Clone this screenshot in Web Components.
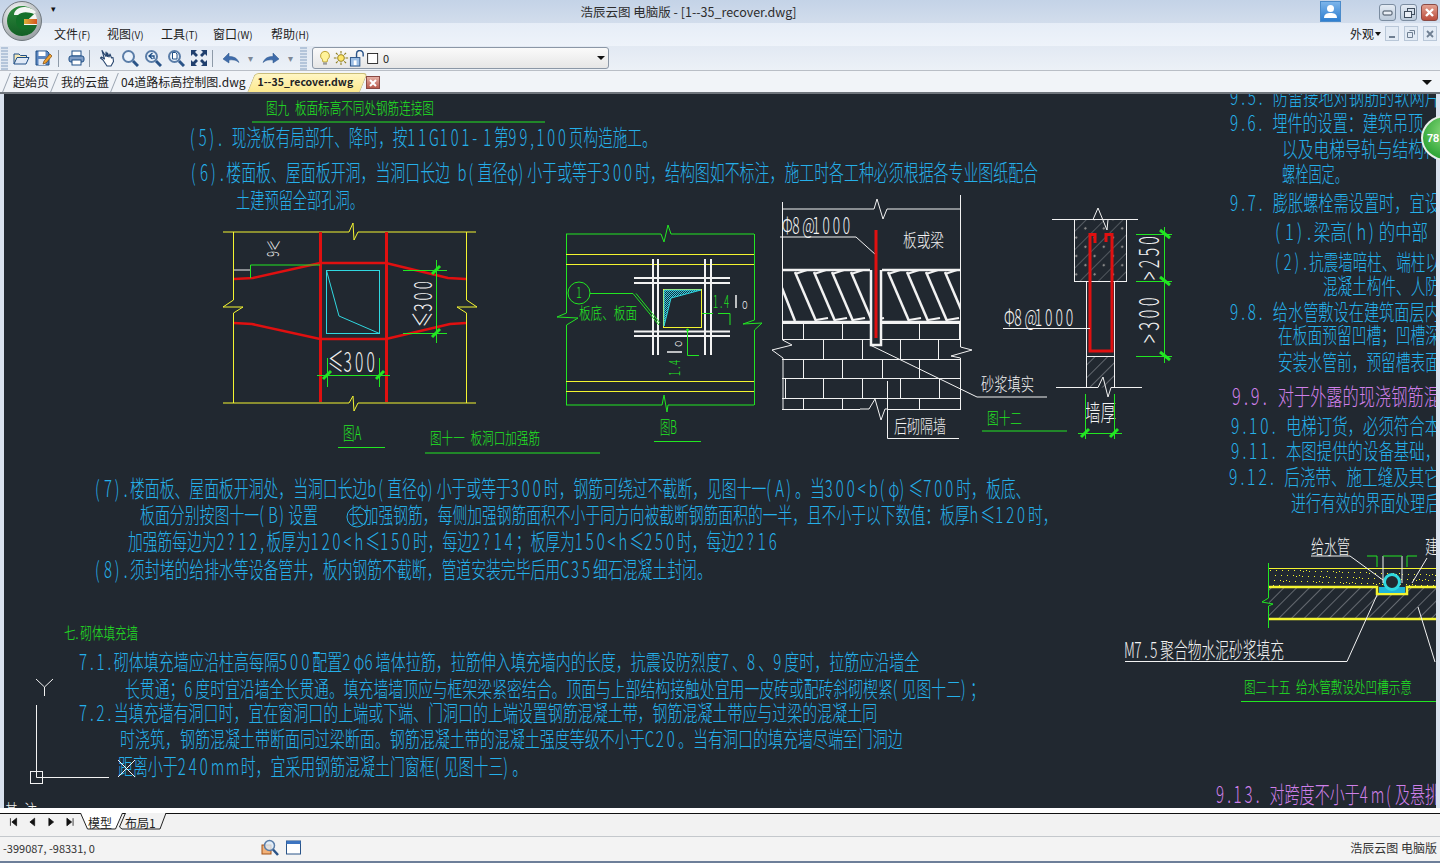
<!DOCTYPE html>
<html lang="zh">
<head>
<meta charset="utf-8">
<title>浩辰云图 电脑版</title>
<style>
  html, body { margin: 0; height: 100%; overflow: hidden; background: #d9e2ee; }
  body { font-family: "Noto Sans CJK SC", "Liberation Sans", sans-serif; font-size: 12px; color: #222; }
</style>
</head>
<body>
<gc-app>
  <gc-titlebar>浩辰云图 电脑版 - [1--35_recover.dwg]</gc-titlebar>
  <gc-menubar>
    <gc-menu-item style="width:53px">文件<small>(F)</small></gc-menu-item>
    <gc-menu-item style="width:54px">视图<small>(V)</small></gc-menu-item>
    <gc-menu-item style="width:52px">工具<small>(T)</small></gc-menu-item>
    <gc-menu-item style="width:58px">窗口<small>(W)</small></gc-menu-item>
    <gc-menu-item style="width:50px">帮助<small>(H)</small></gc-menu-item>
  </gc-menubar>
  <gc-toolbar></gc-toolbar>
  <gc-tabstrip>
    <gc-tab>起始页</gc-tab>
    <gc-tab>我的云盘</gc-tab>
    <gc-tab>04道路标高控制图.dwg</gc-tab>
    <gc-tab active>1--35_recover.dwg</gc-tab>
  </gc-tabstrip>
  <gc-canvas></gc-canvas>
  <gc-layouttabs>
    <gc-sheet-tab active>模型</gc-sheet-tab>
    <gc-sheet-tab>布局1</gc-sheet-tab>
  </gc-layouttabs>
  <gc-statusbar coords="-399087, -98331, 0" brand="浩辰云图 电脑版"></gc-statusbar>
</gc-app>

<script>
const ICONS = {
  open: '<path d="M2 15V5h5l1.500 1.500h6V9" fill="#f6e9b8" stroke="#1f4f86"/><path d="M2 15l3-6.500h12L14 15z" fill="#dfe9f7" stroke="#1f4f86"/>',
  save: '<path d="M2 2h11l2 2v12H2z" fill="#5b86c0" stroke="#1f4f86"/><rect x="4.500" y="2.500" width="7" height="4.500" fill="#fff"/><rect x="4.500" y="10" width="7" height="6" fill="#dfe9f7"/><path d="M9 15l1-3 6-7 2 2-6 7z" fill="#f0a030" stroke="#7a4a10" stroke-width=".7"/>',
  print: '<rect x="5" y="2" width="9" height="5" fill="#fff" stroke="#1f4f86"/><rect x="2" y="7" width="15" height="6" rx="2" fill="#7f9cc4" stroke="#1f4f86"/><rect x="5" y="11" width="9" height="5" fill="#fff" stroke="#1f4f86"/>',
  hand: '<path d="M4 1.500l4 6V3l1.500 4.500V4l1.500 4 1-3 1.500 4 1.500-.5.500 4-2.500 4.500H9L5 11 2.500 9l1-1L6.500 10z" fill="#fff" stroke="#27456e" stroke-width="1.100" stroke-linejoin="round"/>',
  zoom: '<circle cx="7.500" cy="7.500" r="5.500" fill="#eaf2fb" stroke="#5a7da8" stroke-width="2"/><path d="M12 12l5 5" stroke="#2a5488" stroke-width="3"/>',
  zoomprev: '<circle cx="7.500" cy="7.500" r="5.500" fill="#eaf2fb" stroke="#5a7da8" stroke-width="2"/><path d="M12 12l5 5" stroke="#2a5488" stroke-width="3"/><path d="M8.500 4L5 7l3.500 3M5 7h5v3" fill="none" stroke="#1f4f86" stroke-width="1.300"/>',
  zoompage: '<circle cx="7.500" cy="7.500" r="5.500" fill="#eaf2fb" stroke="#5a7da8" stroke-width="2"/><path d="M12 12l5 5" stroke="#2a5488" stroke-width="3"/><path d="M5.500 3.500h3l1.500 1.500v5h-4.500z" fill="#fff" stroke="#1f4f86"/>',
  extents: '<g fill="#1f3f6e"><path d="M1 1h6L5 3l3 3-2 2-3-3-2 2zM17 1v6l-2-2-3 3-2-2 3-3-2-2zM1 17v-6l2 2 3-3 2 2-3 3 2 2zM17 17h-6l2-2-3-3 2-2 3 3 2-2z"/></g>',
  undo: '<path d="M1 10l6-6v3.500c5 0 8 1.500 10 6-3-2.500-6-3-10-2.500V14z" fill="#3f6cab" stroke="#2a5488" stroke-width=".5"/>',
  redo: '<path d="M17 10l-6-6v3.500c-5 0-8 1.500-10 6 3-2.500 6-3 10-2.500V14z" fill="#3f6cab" stroke="#2a5488" stroke-width=".5"/>',
  bulb: '<path d="M9 1.500a5 5 0 0 1 3 9l-.7 3H6.700L6 10.500a5 5 0 0 1 3-9z" fill="#fff39a" stroke="#b59a2a"/><rect x="6.800" y="14" width="4.400" height="2.500" fill="#9a9a9a"/>',
  sun: '<circle cx="9" cy="9" r="3.800" fill="#ffe668" stroke="#8c7a1a"/><path d="M9 1v3M9 14v3M1 9h3M14 9h3M3.300 3.300l2 2M12.700 12.700l2 2M3.300 14.700l2-2M12.700 5.300l2-2" stroke="#8c7a1a" stroke-width="1.200"/>',
  lock: '<rect x="1.500" y="8" width="10" height="9" fill="#9ec0e6" stroke="#2a5488"/><rect x="5" y="11" width="3" height="5" fill="#fff"/><path d="M8 8V4a3.500 3.500 0 0 1 7 0v3" fill="none" stroke="#2a5488" stroke-width="1.500"/>',
  square: '<rect x="2" y="3" width="12" height="12" fill="#fff" stroke="#111"/>',
  find: '<rect x="1" y="6" width="9" height="9" fill="#f2b27a" stroke="#a0521a"/><circle cx="8.500" cy="6.500" r="5" fill="#dcebf9" fill-opacity=".8" stroke="#5a7da8" stroke-width="1.500"/><path d="M12 10.500l5 5.500" stroke="#2a5488" stroke-width="2.500"/>',
  win: '<rect x="1.500" y="2" width="14" height="13" fill="#fff" stroke="#2a5488"/><rect x="1.500" y="2" width="14" height="3" fill="#3d74c0"/>'
};

class GcIcon extends HTMLElement {
  connectedCallback() {
    const size = this.getAttribute('size') || 18;
    this.attachShadow({ mode: 'open' }).innerHTML = `
      <style>:host { display: inline-flex; flex: none; } svg { display: block; }</style>
      <svg width="${size}" height="${size}" viewBox="0 0 18 18">${ICONS[this.getAttribute('name')] || ''}</svg>`;
  }
}
customElements.define('gc-icon', GcIcon);

class GcApp extends HTMLElement {
  constructor() {
    super();
    this.attachShadow({ mode: 'open' }).innerHTML = `
      <style>
        :host { display: flex; flex-direction: column; height: 863px; position: relative; overflow: hidden; }
        .logo { position: absolute; left: 2px; top: 1px; }
        .badge { position: absolute; left: 1421px; top: 115px; width: 42px; height: 42px; border-radius: 50%;
                 border: 2px solid #e8efe8; background: radial-gradient(circle at 50% 35%, #8fdc80, #33a83a 70%);
                 color: #fff; font: bold 11px "Liberation Sans", sans-serif; line-height: 42px; padding-left: 4px; box-sizing: content-box; }
      </style>
      <slot></slot>
      <svg class="logo" width="40" height="40" viewBox="0 0 40 40">
        <defs>
          <radialGradient id="ring" cx=".4" cy=".3" r=".8"><stop offset="0" stop-color="#fff"/><stop offset="1" stop-color="#8d9499"/></radialGradient>
          <linearGradient id="gr" x1="0" y1="0" x2="0" y2="1"><stop offset="0" stop-color="#2d8a3c"/><stop offset="1" stop-color="#125f25"/></linearGradient>
          <linearGradient id="or" x1="0" y1="0" x2="1" y2="0"><stop offset="0" stop-color="#d9b23a"/><stop offset="1" stop-color="#d8541f"/></linearGradient>
        </defs>
        <circle cx="20" cy="20" r="19.500" fill="url(#ring)" stroke="#70787e"/>
        <circle cx="20" cy="20" r="15" fill="#f4f6f4"/>
        <path d="M33 12C30 7 26 5 20 5 11 5 5 12 5 20s6 15 15 15c7 0 13-4 15-11H22v-3" fill="url(#gr)"/>
        <path d="M32 13c-3-2-7-3-11-2-5 1-7 5-7 9 0 5 3 8 7 8.500 3 .3 6-.7 8-3H19" fill="#137029"/>
        <path d="M22 18h13v5H22z" fill="url(#or)"/>
        <path d="M16 14c4-4 11-3 16-1l2-2c-4-4-9-5-12-5-6 0-10 4-10 8z" fill="#f4f6f4"/>
      </svg>
      <div class="badge">78</div>`;
  }
}
customElements.define('gc-app', GcApp);

class GcTitlebar extends HTMLElement {
  constructor() {
    super();
    this.attachShadow({ mode: 'open' }).innerHTML = `
      <style>
        :host { display: flex; align-items: center; height: 23px; flex: none; position: relative;
                background: linear-gradient(#c4d3e7, #d2ddec); font-size: 12.500px; color: #2d2d2d; }
        .qa { margin-left: 51px; width: 8px; color: #111; font: 9px/10px "Liberation Sans", sans-serif; margin-top: -5px; }
        .title { width: 217px; margin-left: 521px; white-space: nowrap; text-align: center; margin-top: -1px; }
        .user { margin-left: 523px; width: 21px; height: 21px; background: linear-gradient(#7cb4ea, #2f7fd0); border: 1px solid #4b8bca; box-sizing: border-box; display: flex; align-items: center; justify-content: center; }
        .btns { margin-left: 38px; display: flex; gap: 4px; margin-top: 2px; }
        .b { width: 17px; height: 17px; box-sizing: border-box; border: 1px solid #7b8ca0; border-radius: 3px; background: linear-gradient(#e4ebf4, #bccada); display: flex; align-items: center; justify-content: center; }
        .b.x { background: linear-gradient(#e3a191, #bb4d3c); border-color: #8a4a44; }
      </style>
      <span class="qa">▾</span>
      <span class="title"><slot></slot></span>
      <span class="user"><svg width="15" height="15" viewBox="0 0 15 15"><circle cx="7.500" cy="4.500" r="3.500" fill="#fff"/><path d="M1 14c0-4 3-5 6.500-5s6.500 1 6.500 5z" fill="#fff"/></svg></span>
      <span class="btns">
        <span class="b"><svg width="11" height="11"><rect x="1" y="4" width="9" height="4" rx="1" fill="#e9eef5" stroke="#3e4c5c"/></svg></span>
        <span class="b"><svg width="12" height="12"><rect x="4.500" y="1.500" width="7" height="6" fill="none" stroke="#3e4c5c"/><rect x="1.500" y="4.500" width="7" height="6" fill="#e9eef5" stroke="#3e4c5c"/></svg></span>
        <span class="b x"><svg width="11" height="11"><path d="M2 2l7 7M9 2L2 9" stroke="#fff" stroke-width="2.400"/></svg></span>
      </span>`;
  }
}
customElements.define('gc-titlebar', GcTitlebar);

class GcMenubar extends HTMLElement {
  constructor() {
    super();
    this.attachShadow({ mode: 'open' }).innerHTML = `
      <style>
        :host { display: flex; align-items: center; height: 23px; flex: none; padding: 0 0 2px 54px; box-sizing: border-box;
                background: linear-gradient(#e6edf7, #eef3fa); }
        .right { margin-left: auto; display: flex; align-items: center; padding-right: 3px; }
        .look { font-size: 12px; white-space: nowrap; display: flex; align-items: center; gap: 1px; margin-right: -1px; }
        .look i { width: 0; height: 0; border: 3.500px solid transparent; border-top: 4px solid #111; border-bottom: 0; }
        .m { width: 14px; height: 15px; box-sizing: border-box; border: 1px solid #b9c7d8; background: #e3ebf5; margin-left: 5px; display: flex; align-items: center; justify-content: center; }
        .m svg { display: block; }
      </style>
      <slot></slot>
      <span class="right">
        <span class="look">外观<i></i></span>
        <span class="m"><svg width="10" height="10"><rect x="2" y="7" width="6" height="2" fill="#6f7f92"/></svg></span>
        <span class="m"><svg width="10" height="10"><path d="M3.500 1.500h5v4M1.500 3.500h5v5h-5z" fill="none" stroke="#6f7f92"/></svg></span>
        <span class="m"><svg width="10" height="10"><path d="M2 2l6 6M8 2L2 8" stroke="#6f7f92" stroke-width="1.800"/></svg></span>
      </span>`;
  }
}
customElements.define('gc-menubar', GcMenubar);

class GcMenuItem extends HTMLElement {
  constructor() {
    super();
    this.attachShadow({ mode: 'open' }).innerHTML = `
      <style>
        :host { display: block; flex: none; font-size: 12px; white-space: nowrap; color: #222; }
        ::slotted(small) { font-size: 10px; }
      </style><slot></slot>`;
  }
}
customElements.define('gc-menu-item', GcMenuItem);

class GcToolbar extends HTMLElement {
  constructor() {
    super();
    const btn = (n, w = 23) => `<span class="btn" style="width:${w}px"><gc-icon name="${n}"></gc-icon></span>`;
    const sep = (l, r) => `<span class="sep" style="margin:0 ${r}px 0 ${l}px"></span>`;
    const drop = (l) => `<span class="drop" style="margin-left:${l}px">▾</span>`;
    this.attachShadow({ mode: 'open' }).innerHTML = `
      <style>
        :host { display: flex; align-items: center; height: 25px; flex: none; box-sizing: border-box;
                background: linear-gradient(#e2e9f3, #ecf1f7); border-bottom: 1px solid #b9bec6; }
        .grip { width: 7px; height: 23px; margin: 0 2px 0 1px; background: repeating-linear-gradient(#b4c5da 0 2px, #dfe7f1 2px 3px); flex: none; }
        .btn { display: flex; justify-content: center; flex: none; }
        .sep { width: 1px; height: 17px; background: #8d9aa8; flex: none; }
        .drop { width: 17px; text-align: center; color: #7d8896; font: 10px "Liberation Sans", sans-serif; flex: none; }
        .combo { width: 297px; height: 22px; box-sizing: border-box; margin-left: 5px; display: flex; align-items: center; gap: 0; padding-left: 4px;
                 border: 1px solid #8b97a6; border-radius: 3px; background: linear-gradient(#fafafa, #e6e6e6); flex: none; font-size: 11px; }
        .combo b { font-weight: normal; margin-left: 2px; }
        .arrow { margin-left: auto; width: 0; height: 0; border: 4px solid transparent; border-top: 4px solid #111; border-bottom: 0; margin-right: 3px; }
      </style>
      <span class="grip"></span>
      ${btn('open', 22)}${btn('save', 22)}${sep(4, 6)}${btn('print', 21)}${sep(3, 5)}
      ${btn('hand')}${btn('zoom')}${btn('zoomprev')}${btn('zoompage')}${btn('extents')}${sep(2, 8)}
      ${btn('undo', 20)}${drop(1)}<span style="width:2px"></span>${btn('redo', 20)}${drop(1)}
      <span class="grip" style="margin:0 0 0 1px"></span>
      <span class="combo">
        <gc-icon name="bulb" size="16"></gc-icon><gc-icon name="sun" size="16"></gc-icon><gc-icon name="lock" size="17"></gc-icon><gc-icon name="square" size="15"></gc-icon><b>0</b>
        <span class="arrow"></span>
      </span>`;
  }
}
customElements.define('gc-toolbar', GcToolbar);

class GcTab extends HTMLElement {
  constructor() {
    super();
    this.attachShadow({ mode: 'open' }).innerHTML = `
      <style>
        :host { display: block; position: relative; padding: 1px 6px 0; font-size: 12px; line-height: 20px; height: 20px; white-space: nowrap; color: #222; flex: none; }
        :host::before { content: ""; position: absolute; inset: 2px -1px 0 -1px; z-index: -1; transform: skewX(-22deg); border-left: 1px solid #9aa4b0; }
        :host([active]) { font-weight: bold; font-size: 10.500px; padding-right: 9px; }
        :host([active])::before { background: linear-gradient(#fff6c4, #fce98e); border: 1px solid #c9bd7a; border-bottom: 0; border-radius: 4px 4px 0 0; }
      </style><slot></slot>`;
  }
}
customElements.define('gc-tab', GcTab);

class GcTabstrip extends HTMLElement {
  constructor() {
    super();
    this.attachShadow({ mode: 'open' }).innerHTML = `
      <style>
        :host { display: flex; align-items: flex-end; height: 23px; flex: none; padding-left: 7px; box-sizing: border-box;
                background: #f1f4f8; border-bottom: 2px solid #6f757c; position: relative; z-index: 0; }
        .close { width: 14px; height: 13px; margin: 0 0 3px 4px; box-sizing: border-box; border: 1px solid #8a4a44; background: linear-gradient(#e6b0a6, #b85a4c); display: flex; align-items: center; justify-content: center; }
        .menu { margin-left: auto; margin-right: 8px; margin-bottom: 7px; width: 0; height: 0; border: 5px solid transparent; border-top: 5px solid #111; border-bottom: 0; }
      </style>
      <slot></slot>
      <span class="close"><svg width="8" height="8"><path d="M1 1l6 6M7 1L1 7" stroke="#fff" stroke-width="2"/></svg></span>
      <span class="menu"></span>`;
  }
}
customElements.define('gc-tabstrip', GcTabstrip);

// every drawing helper takes page coordinates, the svg viewBox starts at the canvas corner
const CYAN = '#25b0ea', GREEN = '#22e622', WHITE = '#f2f2f2', RED = '#e01010', YELLOW = '#f4f430', PINK = '#d080ea', TEAL = '#30d8e0';
const BG = '#212830';

function esc(s) { return s.replace(/&/g, '&amp;').replace(/</g, '&lt;'); }

// CAD fonts give each glyph a fixed slot, wide for hanzi and narrower for latin
function slot(ch) {
  if (ch === ' ') return .5;
  if ('.,:;'.includes(ch)) return .42;
  if ('()'.includes(ch)) return .6;
  if ('≤≥m'.includes(ch)) return 1;
  if (ch.charCodeAt(0) < 0x2E80) return .74;
  return 1;
}
function cadText(s, len, size) {
  const chars = Array.from(s);
  const total = chars.reduce((a, c) => a + slot(c), 0);
  const unit = len / total;
  const sx = Math.min(1.15, unit / size);
  let at = 0;
  const xs = chars.map(c => { const v = at; at += slot(c) * unit / sx; return v.toFixed(1); });
  return { sx: sx.toFixed(3), xs: xs.join(' ') };
}
function txt(x0, x1, cy, s, color = CYAN, size = 20) {
  size = size * 1.08;
  const { sx, xs } = cadText(s, x1 - x0, size);
  return `<text transform="translate(${x0} ${cy + size * 0.36}) scale(${sx} 1)" x="${xs}" y="0" fill="${color}" font-size="${size}">${esc(s)}</text>`;
}
function vtxt(cx, y0, y1, s, color = WHITE, size = 24, rot = -90) {
  const len = y1 - y0, cy = (y0 + y1) / 2;
  const { sx, xs } = cadText(s, len, size);
  return `<text transform="rotate(${rot} ${cx} ${cy}) translate(${cx - len / 2} ${cy + size * 0.36}) scale(${sx} 1)" x="${xs}" y="0" fill="${color}" font-size="${size}">${esc(s)}</text>`;
}
function pl(color, w, ...p) {
  const pts = [];
  for (let i = 0; i < p.length; i += 2) pts.push(p[i] + ',' + p[i + 1]);
  return `<polyline points="${pts.join(' ')}" fill="none" stroke="${color}" stroke-width="${w}"/>`;
}
function tick(x, y, dx = 4, dy = -4) { return pl(GREEN, 3, x - dx, y - dy, x + dx, y + dy); }

function paragraphs() {
  return [
    txt(266, 434, 108, '图九 板面标高不同处钢筋连接图', GREEN, 15), pl(GREEN, 1, 252, 122, 545, 122),
    txt(190, 657, 138, '(5). 现浇板有局部升、降时，按11G101-1第99,100页构造施工。', CYAN, 21),
    txt(191, 1038, 173, '(6).楼面板、屋面板开洞，当洞口长边 b(直径φ)小于或等于300时，结构图如不标注，施工时各工种必须根据各专业图纸配合', CYAN, 21),
    txt(236, 364, 200, '土建预留全部孔洞。', CYAN, 20),
    txt(95, 1030, 489, '(7).楼面板、屋面板开洞处，当洞口长边b(直径φ)小于或等于300时，钢筋可绕过不截断，见图十一(A)。当300<b(φ)≤700时，板底、', CYAN, 21),
    txt(140, 318, 515, '板面分别按图十一(B)设置', CYAN, 20),
    txt(349, 1058, 515, '长加强钢筋，每侧加强钢筋面积不小于同方向被截断钢筋面积的一半，且不小于以下数值：板厚h≤120时，', CYAN, 20),
    `<circle cx="357" cy="517" r="10" fill="none" stroke="${CYAN}"/>`,
    txt(128, 780, 542, '加强筋每边为2?12,板厚为120<h≤150时，每边2?14；板厚为150<h≤250时，每边2?16', CYAN, 21),
    txt(95, 712, 570, '(8).须封堵的给排水等设备管井，板内钢筋不截断，管道安装完毕后用C35细石混凝土封闭。', CYAN, 21),
    txt(64, 138, 633, '七.砌体填充墙', GREEN, 15),
    txt(79, 919, 662, '7.1.砌体填充墙应沿柱高每隔500配置2φ6墙体拉筋，拉筋伸入填充墙内的长度，抗震设防烈度7、8、9度时，拉筋应沿墙全', CYAN, 20),
    txt(125, 985, 689, '长贯通；6度时宜沿墙全长贯通。填充墙墙顶应与框架梁紧密结合。顶面与上部结构接触处宜用一皮砖或配砖斜砌楔紧(见图十二)；', CYAN, 20),
    txt(79, 877, 713, '7.2.当填充墙有洞口时，宜在窗洞口的上端或下端、门洞口的上端设置钢筋混凝土带，钢筋混凝土带应与过梁的混凝土同', CYAN, 20),
    txt(120, 903, 739, '时浇筑，钢筋混凝土带断面同过梁断面。钢筋混凝土带的混凝土强度等级不小于C20。当有洞口的填充墙尽端至门洞边', CYAN, 20),
    txt(118, 527, 767, '距离小于240mm时，宜采用钢筋混凝土门窗框(见图十三)。', CYAN, 21),
    // right column, runs past the edge of the view
    txt(1230, 1440, 97, '9.5. 防雷接地对钢筋的软网片', CYAN, 20),
    txt(1230, 1423, 123, '9.6. 埋件的设置：建筑吊顶', CYAN, 20),
    txt(1282, 1440, 149, '以及电梯导轨与结构构', CYAN, 20),
    txt(1282, 1348, 174, '螺栓固定。', CYAN, 20),
    txt(1230, 1440, 203, '9.7. 膨胀螺栓需设置时，宜设', CYAN, 20),
    txt(1275, 1428, 232, '(1).梁高(h)的中部', CYAN, 20),
    txt(1275, 1440, 262, '(2).抗震墙暗柱、端柱以', CYAN, 20),
    txt(1323, 1440, 286, '混凝土构件、人防', CYAN, 20),
    txt(1230, 1440, 312, '9.8. 给水管敷设在建筑面层内', CYAN, 20),
    txt(1278, 1440, 335, '在板面预留凹槽；凹槽深', CYAN, 20),
    txt(1278, 1440, 362, '安装水管前，预留槽表面', CYAN, 20),
    txt(1232, 1440, 397, '9.9. 对于外露的现浇钢筋混', PINK, 21),
    txt(1231, 1440, 426, '9.10. 电梯订货，必须符合本', CYAN, 20),
    txt(1231, 1440, 451, '9.11. 本图提供的设备基础，', CYAN, 20),
    txt(1229, 1440, 477, '9.12. 后浇带、施工缝及其它', CYAN, 20),
    txt(1291, 1440, 503, '进行有效的界面处理后', CYAN, 20),
    txt(1216, 1440, 795, '9.13. 对跨度不小于4m(及悬挑', PINK, 21),
    txt(5, 37, 812, '基 注', WHITE, 18)
  ].join('');
}

function figureA() {
  return [
    pl(YELLOW, 1, 223, 232, 349, 232, 353, 223, 354, 240, 358, 232, 476, 232),
    pl(YELLOW, 1, 223, 403, 349, 403, 353, 396, 354, 411, 358, 403, 476, 403),
    pl(YELLOW, 1, 233.500, 232, 233.500, 300, 223, 307, 243, 307, 233.500, 313, 233.500, 403),
    pl(YELLOW, 1, 466.500, 232, 466.500, 300, 477, 307, 457, 307, 466.500, 313, 466.500, 403),
    pl(RED, 3, 320.500, 232, 320.500, 402), pl(RED, 3, 386.500, 232, 386.500, 402),
    pl(RED, 2.500, 234, 279, 253, 278, 320, 263, 386, 263, 448, 278, 466, 279),
    pl(RED, 2.500, 234, 323, 252, 324, 320, 339, 386, 339, 450, 324, 466, 323),
    `<rect x="326.500" y="270.500" width="53" height="63" fill="none" stroke="${TEAL}"/>`,
    pl(TEAL, 1, 326.500, 270.500, 339, 316, 379.500, 333.500),
    pl(GREEN, 1, 320, 265, 250.500, 265, 250.500, 278), pl(WHITE, 1, 234, 270, 250, 270),
    vtxt(273, 240, 259, '≥6', WHITE, 16, 90),
    pl(GREEN, 1, 403, 270.500, 447, 270.500), pl(GREEN, 1, 403, 333.500, 447, 333.500), pl(GREEN, 1, 436.500, 260, 436.500, 343),
    tick(436, 270), tick(436, 333),
    vtxt(423, 278, 327, '≤300', WHITE, 25),
    txt(328, 378, 362, '≤300', WHITE, 25),
    pl(GREEN, 1, 317, 375.500, 390, 375.500), pl(GREEN, 1, 327.500, 358, 327.500, 387), pl(GREEN, 1, 379.500, 358, 379.500, 387),
    tick(327, 375), tick(380, 375),
    txt(343, 363, 433, '图A', GREEN, 17), pl(GREEN, 1, 338, 447.500, 385, 447.500),
    txt(430, 540, 438, '图十一 板洞口加强筋', GREEN, 15), pl(GREEN, 1, 425, 453, 600, 453)
  ].join('');
}

function figureB() {
  const rows = [254, 264, 381, 391].map(y => pl(YELLOW, 1, 566, y + .5, 754, y + .5)).join('');
  const bars = [278, 283, 331.5, 336].map(y => pl(WHITE, 2, 634, y, 730, y)).join('')
    + [653, 658, 705, 711].map(x => pl(WHITE, 2, x, 259, x, 355)).join('');
  return [
    pl(GREEN, 1, 566, 234, 661, 234, 664, 242, 668, 225, 671, 234, 754, 234),
    pl(GREEN, 1, 566, 405, 662, 405, 664, 395, 667, 412, 668, 405, 754, 405),
    pl(GREEN, 1, 566.500, 234, 566.500, 313, 557, 317, 578, 318, 566.500, 325, 566.500, 405),
    pl(GREEN, 1, 754.500, 234, 754.500, 320, 743, 324, 762, 323, 754.500, 330, 754.500, 405),
    rows, bars,
    `<rect x="663.500" y="289.500" width="38" height="38" fill="${BG}" stroke="${YELLOW}"/>`,
    `<polygon points="664,290 701,290 671,298 664,326" fill="url(#dots)" stroke="${TEAL}"/>`,
    `<circle cx="579" cy="293" r="11" fill="none" stroke="${GREEN}"/>`,
    txt(576, 584, 293, '1', GREEN, 14),
    pl(GREEN, 1, 590, 293.500, 633, 293.500, 659, 325), pl(GREEN, 1, 636, 293.500, 660, 323),
    txt(579, 637, 313, '板底、板面', GREEN, 15),
    txt(713, 731, 302, '1.4', GREEN, 16),
    pl(WHITE, 1.500, 736, 295, 736, 308), txt(742, 749, 304, 'o', WHITE, 13),
    pl(GREEN, 1, 702, 313.500, 713, 313.500), pl(GREEN, 1, 718, 313.500, 730, 313.500, 730, 325),
    pl(GREEN, 1, 687.500, 330, 687.500, 355.500, 699, 355.500), `<circle cx="687.500" cy="330" r="1.500" fill="${GREEN}"/>`,
    vtxt(675, 358, 376, '1.4', GREEN, 15),
    pl(WHITE, 1.500, 667, 352, 682, 352), vtxt(677, 339, 347, 'o', WHITE, 13),
    txt(660, 678, 427, '图B', GREEN, 17), pl(GREEN, 1, 654, 441.500, 701, 441.500)
  ].join('');
}

function figureC() {
  let band = '';
  [795, 814, 832, 851, 888, 907, 926, 945].forEach(x => {
    band += pl(WHITE, 2.500, x, 272, x + 21, 321) + pl(WHITE, 2, x, 274, x + 12, 270) + pl(WHITE, 2, x + 21, 320, x + 33, 318);
  });
  band += pl(WHITE, 2.500, 782, 288, 795, 321);
  const brick = [323, 339, 359, 378, 398, 409].map(y => pl(WHITE, 1, 782, y + .5, 960, y + .5)).join('');
  const joints = [
    [323, 339, [803, 842, 919, 959]],
    [339, 359, [823, 862, 900, 938]],
    [359, 378, [803, 842, 882, 919]],
    [378, 398, [785, 823, 862, 900, 939]],
    [398, 409, [803, 842, 882, 919]]
  ].map(([a, b, xs]) => xs.map(x => pl(WHITE, 1, x + .5, a, x + .5, b)).join('')).join('');
  return [
    pl(WHITE, 1, 782, 209, 874, 209, 877, 199, 883, 219, 887, 209, 960, 209),
    pl(WHITE, 1, 782.500, 202, 782.500, 340, 792, 345, 772, 350, 783, 358, 783, 410),
    pl(WHITE, 1, 960.500, 195, 960.500, 347, 972, 350, 951, 356, 960.500, 358, 960.500, 410),
    txt(782, 853, 226, 'Φ8@1000', WHITE, 21),
    pl(WHITE, 1, 780, 237, 856, 237, 876, 255),
    txt(903, 944, 240, '板或梁', WHITE, 17),
    `<g clip-path="url(#bandClip)">${band}</g>`,
    pl(WHITE, 2.500, 782, 270, 960, 270), pl(WHITE, 2.500, 782, 322, 960, 322),
    brick, joints,
    `<rect x="870" y="268" width="12" height="78" fill="${BG}"/>`,
    pl(WHITE, 2.500, 871, 270, 871, 345, 881, 345, 881, 270),
    pl(RED, 3, 876, 230, 876, 338),
    pl(WHITE, 1, 870, 345, 977, 397, 1047, 397),
    `<rect x="860" y="399" width="27" height="22" fill="${BG}"/>`,
    pl(WHITE, 1, 860, 409, 869, 409, 875, 399, 881, 420, 885, 409, 887, 409),
    pl(WHITE, 1, 887.500, 381, 887.500, 438.500, 959, 438.500),
    txt(981, 1034, 384, '砂浆填实', WHITE, 17),
    txt(894, 946, 426, '后砌隔墙', WHITE, 17),
    txt(987, 1022, 418, '图十二', GREEN, 15), pl(GREEN, 1, 982, 431, 1067, 431)
  ].join('');
}

function figureD() {
  return [
    `<rect x="1074.500" y="219.500" width="52" height="62" fill="url(#conc)" stroke="${WHITE}"/>`,
    `<rect x="1086.500" y="356.500" width="28" height="31" fill="url(#hatch)"/>`,
    pl(WHITE, 1, 1052, 219.500, 1093, 219.500, 1098, 208, 1107, 230, 1108, 219.500, 1138, 219.500),
    pl(WHITE, 1, 1086.500, 282, 1086.500, 387), pl(WHITE, 1, 1114.500, 282, 1114.500, 387),
    pl(WHITE, 1, 1086, 356.500, 1114, 356.500),
    pl(WHITE, 1, 1056, 387.500, 1098, 387.500, 1103, 377, 1108, 397, 1111, 387.500, 1142, 387.500),
    pl(RED, 3, 1095, 243, 1095, 234.500, 1090, 234.500, 1090, 351, 1112, 351, 1112, 234.500, 1106, 234.500, 1106, 242),
    pl(WHITE, 1, 1003, 328.500, 1090, 328.500),
    txt(1004, 1076, 318, 'Φ8@1000', WHITE, 21),
    pl(GREEN, 1, 1164.500, 227, 1164.500, 363),
    [234, 281, 356].map(y => pl(GREEN, 1, 1136, y + .5, 1172, y + .5) + tick(1165, y, 5, 4)).join(''),
    vtxt(1149, 233, 280, '>250', WHITE, 27),
    vtxt(1149, 294, 343, '>300', WHITE, 27),
    txt(1085, 1116, 413, '墙厚', WHITE, 21),
    pl(GREEN, 1, 1078, 433.500, 1122, 433.500), pl(GREEN, 1, 1085.500, 394, 1085.500, 439), pl(GREEN, 1, 1114.500, 394, 1114.500, 439),
    tick(1085, 433), tick(1114, 433)
  ].join('');
}

function figureE() {
  let dots = '';
  for (let i = 0; i < 110; i++) {
    const x = 1270 + (i * 73) % 166, y = 570 + (i * 29) % 16;
    dots += `<rect x="${x}" y="${y}" width="1" height="1" fill="${YELLOW}"/>`;
  }
  return [
    `<rect x="1269" y="587" width="170" height="32" fill="url(#hatch)"/>`,
    dots,
    pl(GREEN, 1, 1268.500, 563, 1268.500, 598, 1262, 602, 1273, 604, 1268.500, 606, 1268.500, 628),
    pl(YELLOW, 1, 1269, 568.500, 1440, 568.500),
    pl(YELLOW, 2.500, 1269, 587, 1377, 587, 1377, 594, 1407, 594, 1407, 587, 1440, 587),
    pl(YELLOW, 2.500, 1269, 619, 1440, 619),
    `<rect x="1379" y="587" width="26" height="6" fill="#1fb4d8"/>`,
    `<circle cx="1392" cy="582" r="7.500" fill="${BG}" stroke="${TEAL}" stroke-width="3"/>`,
    pl(WHITE, 1, 1383, 556, 1383, 583), pl(WHITE, 1, 1402, 556, 1402, 583),
    pl(GREEN, 1, 1367, 556, 1377, 556, 1377, 567), pl(GREEN, 1, 1383, 556, 1402, 556), pl(GREEN, 1, 1407, 567, 1407, 556, 1417, 556),
    txt(1311, 1350, 547, '给水管', WHITE, 18),
    pl(WHITE, 1, 1311, 556, 1350, 556, 1383, 580),
    txt(1425, 1452, 547, '建筑', WHITE, 18),
    pl(WHITE, 1, 1427, 558, 1412, 583),
    txt(1124, 1284, 650, 'M7.5聚合物水泥砂浆填充', WHITE, 20),
    pl(WHITE, 1, 1125, 661.500, 1347, 661.500, 1377, 595),
    pl(WHITE, 1, 1418, 607, 1435, 662),
    txt(1244, 1412, 687, '图二十五 给水管敷设处凹槽示意', GREEN, 15),
    pl(GREEN, 1, 1241, 701.500, 1440, 701.500)
  ].join('');
}

function ucsIcon() {
  return [
    pl(WHITE, 1, 36.500, 705, 36.500, 777.500, 109, 777.500),
    `<rect x="30.500" y="771.500" width="12" height="12" fill="none" stroke="${WHITE}"/>`,
    pl(WHITE, 1, 36, 679, 44.500, 687, 53, 679), pl(WHITE, 1, 44.500, 687, 44.500, 696),
    pl(WHITE, 1, 118, 760, 135, 777), pl(WHITE, 1, 118, 777, 135, 760)
  ].join('');
}

class GcCanvas extends HTMLElement {
  constructor() {
    super();
    this.attachShadow({ mode: 'open' }).innerHTML = `
      <style>
        :host { display: block; flex: 1; min-height: 0; padding: 0 4px; background: #d9e2ee; }
        svg { display: block; width: 1432px; height: 714px; background: ${BG};
              font-family: "Noto Sans CJK SC", "Liberation Sans", sans-serif; font-weight: 300; }
      </style>
      <svg viewBox="4 94 1432 714">
        <defs>
          <clipPath id="bandClip"><rect x="782" y="270" width="178" height="52"/></clipPath>
          <pattern id="hatch" width="9" height="9" patternUnits="userSpaceOnUse" patternTransform="rotate(45)">
            <path d="M0 0V9" stroke="#c8ccd0" stroke-width=".8"/>
          </pattern>
          <pattern id="conc" width="13" height="13" patternUnits="userSpaceOnUse" patternTransform="rotate(45)">
            <path d="M0 0V13" stroke="#9aa0a4" stroke-width=".8"/><circle cx="6" cy="5" r="1.200" fill="#888"/>
          </pattern>
          <pattern id="dots" width="2" height="2" patternUnits="userSpaceOnUse">
            <rect width="2" height="2" fill="${BG}"/><rect width="1" height="1" fill="#30d0e8"/><rect x="1" y="1" width="1" height="1" fill="#30d0e8"/>
          </pattern>
        </defs>
        ${paragraphs()}${figureA()}${figureB()}${figureC()}${figureD()}${figureE()}${ucsIcon()}
      </svg>`;
  }
}
customElements.define('gc-canvas', GcCanvas);

class GcSheetTab extends HTMLElement {
  connectedCallback() {
    const on = this.hasAttribute('active');
    const d = on ? 'M.5 0L7.500 16H35.500L42.500 0' : 'M6.500 0L.5 14L3 16H41L47 0';
    this.attachShadow({ mode: 'open' }).innerHTML = `
      <style>
        :host { display: block; flex: none; position: relative; z-index: 0; height: 21px; line-height: 21px; font-size: 12px; white-space: nowrap;
                box-sizing: border-box; width: ${on ? 43 : 48}px; padding-left: ${on ? 8 : 6}px; margin-left: ${on ? 0 : -4}px; }
        svg { position: absolute; left: 0; top: 1px; z-index: -1; }
      </style>
      <svg width="${on ? 43 : 48}" height="17"><path d="${d}" fill="${on ? '#fff' : '#f2f2f2'}" stroke="#222"/></svg>
      <slot></slot>`;
  }
}
customElements.define('gc-sheet-tab', GcSheetTab);

class GcLayouttabs extends HTMLElement {
  constructor() {
    super();
    const nav = ['M8 1v8L3 5z M1.500 1v8', 'M7 1v8L2 5z', 'M3 1v8l5-4z', 'M2 1v8l5-4z M8.500 1v8'];
    this.attachShadow({ mode: 'open' }).innerHTML = `
      <style>
        :host { display: flex; align-items: flex-start; height: 28px; flex: none; box-sizing: border-box; position: relative; z-index: 0;
                padding: 4px 0 0 8px; background: linear-gradient(#fff 0 5px, #111 5px 6px, #f2f2f2 6px); }
        .nav { display: flex; gap: 9px; margin: 0 6px 0 1px; padding-top: 5px; flex: none; }
        svg { display: block; }
      </style>
      <span class="nav">${nav.map(d => `<svg width="9.500" height="10" viewBox="0 0 10 10"><path d="${d}" fill="#111" stroke="#111" stroke-width=".8"/></svg>`).join('')}</span>
      <slot></slot>`;
  }
}
customElements.define('gc-layouttabs', GcLayouttabs);

class GcStatusbar extends HTMLElement {
  constructor() {
    super();
    this.attachShadow({ mode: 'open' }).innerHTML = `
      <style>
        :host { display: flex; align-items: center; height: 27px; flex: none; box-sizing: border-box; position: relative; padding: 0 3px 5px 3px;
                background: linear-gradient(#f3f3f3 0 24px, #6d7f99 24px); border-top: 1px solid #c4c8cc; font-size: 12px; color: #333; }
        .coords { width: 258px; font-size: 11px; }
        .ic { display: flex; gap: 6px; }
        .brand { margin-left: auto; }
      </style>
      <span class="coords">${this.getAttribute('coords')}</span>
      <span class="ic"><gc-icon name="find"></gc-icon><gc-icon name="win"></gc-icon></span>
      <span class="brand">${this.getAttribute('brand')}</span>`;
  }
}
customElements.define('gc-statusbar', GcStatusbar);
</script>
</body>
</html>
